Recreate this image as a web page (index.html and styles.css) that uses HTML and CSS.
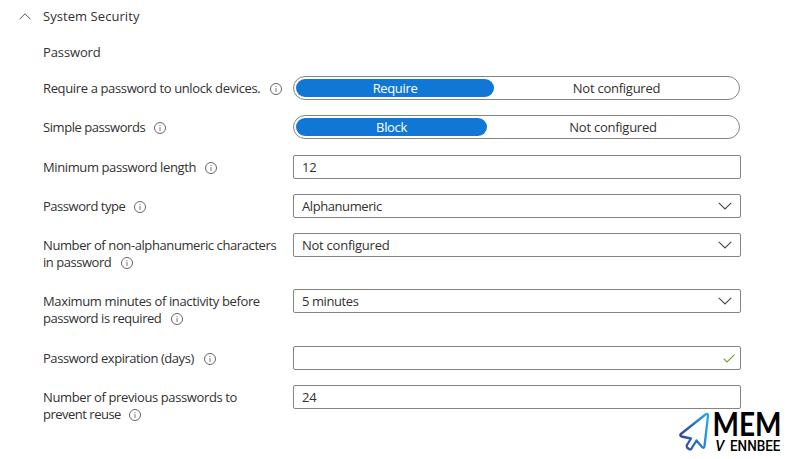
FILE: index.html
```
<!DOCTYPE html>
<html lang="en">
<head>
<meta charset="utf-8">
<title>System Security</title>
<link rel="stylesheet" href="styles.css">
</head>
<body>
<svg class="defs" width="0" height="0" aria-hidden="true">
  <symbol id="info" viewBox="0 0 12 12"><circle cx="6" cy="6" r="5.500" fill="none" stroke="#666" stroke-width="1"/><path d="M6 5v4M6 3v1" stroke="#777" stroke-width="1"/></symbol>
  <symbol id="down" viewBox="0 0 14 8"><path d="M.8.8 7 7 13.2.8" fill="none" stroke="#444" stroke-width="1.1"/></symbol>
</svg>
<main class="section">
  <header class="section-head">
    <svg class="collapse" viewBox="0 0 12 7"><path d="M.5 6.3 6 .8l5.500 5.500" fill="none" stroke="#555" stroke-width="1"/></svg>
    <h1 class="w-head">System Security</h1>
  </header>
  <h2>Password</h2>
  <div class="row"><div class="label"><span class="w-require">Require a password to unlock devices.</span><svg class="info"><use href="#info"/></svg></div>
    <div class="toggle"><span class="option selected require">Require</span><span class="option rest">Not configured</span></div></div>
  <div class="row simple"><div class="label"><span class="w-simple">Simple passwords</span><svg class="info near"><use href="#info"/></svg></div>
    <div class="toggle"><span class="option selected block">Block</span><span class="option rest">Not configured</span></div></div>
  <div class="row"><div class="label"><span class="w-min">Minimum password length</span><svg class="info near"><use href="#info"/></svg></div>
    <div class="field">12</div></div>
  <div class="row"><div class="label"><span class="w-type">Password type</span><svg class="info near"><use href="#info"/></svg></div>
    <div class="field"><span class="value">Alphanumeric</span><svg class="down"><use href="#down"/></svg></div></div>
  <div class="row tall"><div class="label"><span class="w-number">Number of non-alphanumeric characters</span><br><span class="w-in">in password</span><svg class="info"><use href="#info"/></svg></div>
    <div class="field"><span class="value loose">Not configured</span><svg class="down"><use href="#down"/></svg></div></div>
  <div class="row taller"><div class="label"><span class="w-max">Maximum minutes of inactivity before</span><br><span class="w-required">password is required</span><svg class="info"><use href="#info"/></svg></div>
    <div class="field"><span class="value">5 minutes</span><svg class="down"><use href="#down"/></svg></div></div>
  <div class="row"><div class="label"><span class="w-exp">Password expiration (days)</span><svg class="info"><use href="#info"/></svg></div>
    <div class="field"><span></span><svg class="check" viewBox="0 0 12 9"><path d="M.6 4.700 4 8 11.500.6" fill="none" stroke="#6a9f35" stroke-width="1.1"/></svg></div></div>
  <div class="row"><div class="label"><span class="w-prev">Number of previous passwords to</span><br><span class="w-reuse">prevent reuse</span><svg class="info near"><use href="#info"/></svg></div>
    <div class="field">24</div></div>
</main>
<svg class="brand" viewBox="0 -12 109 59" role="img" aria-label="MEM Vennbee">
  <defs><linearGradient id="arrow" x1="0" x2="1" y1=".6" y2=".3"><stop offset="0" stop-color="#3d3f9c"/><stop offset=".5" stop-color="#2870c4"/><stop offset="1" stop-color="#20a7e8"/></linearGradient></defs>
  <path d="M27.500 2.500Q30.300 1 30 4L26.500 34Q26 37 24 35L18.500 28.500 13.500 36.500Q12.500 38 11 37L9 35.500Q8 34.500 9 33L13 26.500 3.500 24.500Q1 23.500 3.500 21.500Z" fill="none" stroke="url(#arrow)" stroke-width="2.300" stroke-linejoin="round"/>
  <text class="mem" x="34.500" y="24.300" textLength="69" lengthAdjust="spacingAndGlyphs">MEM</text>
  <text class="bee" transform="translate(36.500 38.700) skewX(-9)" x="0" y="0" textLength="9" lengthAdjust="spacingAndGlyphs">V</text>
  <text class="bee" x="52" y="38.700" textLength="50.500" lengthAdjust="spacingAndGlyphs">ENNBEE</text>
</svg>
</body>
</html>
```
FILE: styles.css
```
* { box-sizing: border-box; }
body {
  position: relative;
  width: 787px;
  height: 459px;
  margin: 0;
  overflow: hidden;
  background: #fff;
  color: #323130;
  font: 13px/17px "Open Sans", "Noto Sans", sans-serif;
}
.defs { position: absolute; }
.section { padding: 8px 0 0 43px; }
.section-head { display: flex; align-items: center; height: 17px; margin-left: -24px; }
.collapse { width: 12px; height: 7px; margin-right: 12px; }
h1, h2 { margin: 0; font-size: 13px; font-weight: 400; line-height: 17px; }
h1 { letter-spacing: .06px; }
h2 { margin: 19px 0 15px; letter-spacing: -.12px; }
.row { display: grid; grid-template-columns: 250px 448px; height: 39px; align-items: start; }
.row.simple { height: 40px; }
.row.tall { height: 56px; }
.row.taller { height: 57px; }
.label { padding-top: 4px; white-space: nowrap; }
.w-require { letter-spacing: -.36px; }
.w-simple { letter-spacing: -.44px; }
.w-min { letter-spacing: -.39px; }
.w-type { letter-spacing: -.46px; }
.w-number { letter-spacing: -.4px; }
.w-in { letter-spacing: -.46px; }
.w-max { letter-spacing: -.36px; }
.w-required { letter-spacing: -.45px; }
.w-exp { letter-spacing: -.45px; }
.w-prev { letter-spacing: -.38px; }
.w-reuse { letter-spacing: -.5px; }
.info { width: 12px; height: 12px; margin-left: 10px; vertical-align: -2px; }
.info.near { margin-left: 8.5px; }
.field {
  display: flex;
  align-items: center;
  justify-content: space-between;
  height: 24px;
  padding: 0 8px;
  border: 1px solid #858483;
  border-radius: 2px;
  letter-spacing: -.3px;
}
.value { letter-spacing: -.42px; }
.loose { letter-spacing: -.25px; }
.down { width: 14px; height: 8px; }
.check { width: 12px; height: 9px; margin-right: -3px; }
.toggle {
  display: flex;
  align-items: center;
  width: 447px;
  height: 24px;
  padding: 0 2px;
  border: 1px solid #858483;
  border-radius: 12px;
  letter-spacing: -.25px;
}
.option { height: 18px; border-radius: 9px; text-align: center; line-height: 19px; }
.selected { background: #1078d4; color: #fff; font-weight: 500; letter-spacing: -.35px; }
.require { width: 198px; }
.block { width: 191px; }
.rest { flex: 1; padding-left: 2px; }
.brand { position: absolute; left: 678px; top: 400px; width: 109px; height: 59px; }
.mem { font: 700 31.5px Lato, sans-serif; }
.bee { font: 500 15.5px Roboto, sans-serif; }
```
